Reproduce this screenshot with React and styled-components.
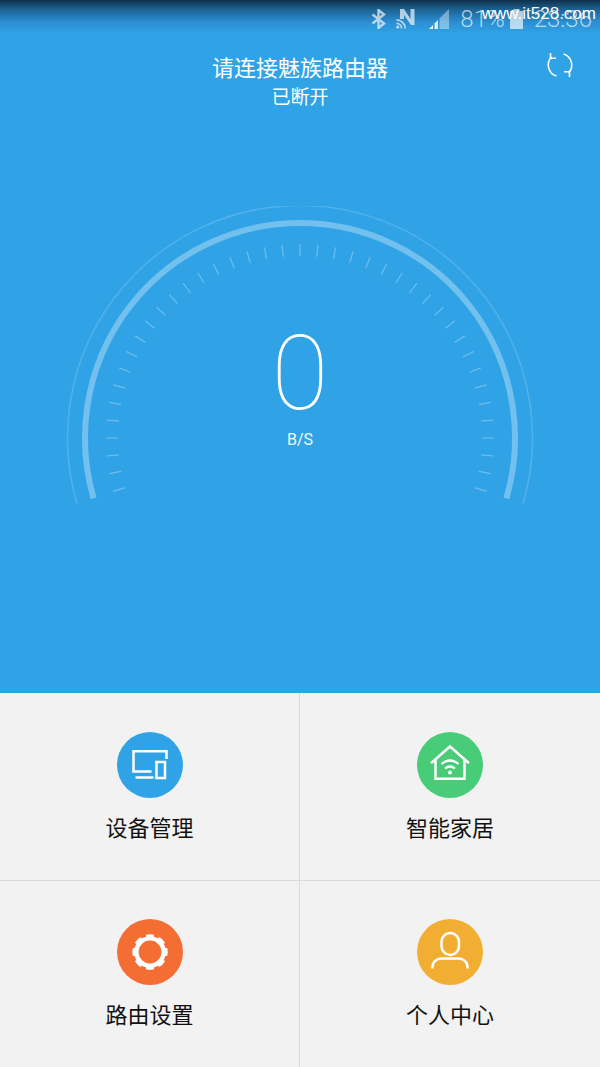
import React from 'react';
import styled, { createGlobalStyle } from 'styled-components';

const cjk = '"Noto Sans CJK SC", "Noto Sans", sans-serif';

const GlobalStyle = createGlobalStyle`
  html, body {
    margin: 0;
    padding: 0;
    background: #f2f2f2;
  }
  body {
    font-family: ${cjk};
  }
`;

const Page = styled.div`
  position: relative;
  width: 600px;
  height: 1067px;
  display: flex;
  flex-direction: column;
  overflow: hidden;
`;

const Hero = styled.section`
  height: 693px;
  flex: none;
  display: flex;
  flex-direction: column;
  background: linear-gradient(180deg, #10304a 0, #1c6596 10px, #2b8fd2 22px, #30a3e6 34px);
  color: #fff;
`;

const StatusBar = styled.div`
  position: relative;
  height: 38px;
  flex: none;
  display: flex;
  justify-content: flex-end;
  align-items: center;
  padding-right: 8px;
  box-sizing: border-box;
  color: rgba(255, 255, 255, 0.66);
`;

const StatusIcon = styled.svg`
  display: block;
  flex: none;
  margin-right: ${p => p.$gap}px;
`;

const StatusText = styled.span`
  font-family: Roboto, sans-serif;
  font-weight: 300;
  font-size: 24px;
  line-height: 38px;
  margin-right: ${p => p.$gap || 0}px;
`;

const Watermark = styled.span`
  position: absolute;
  top: 3px;
  right: 4px;
  font-family: "Liberation Sans", sans-serif;
  font-size: 17px;
  line-height: 22px;
  color: #fff;
`;

const Header = styled.header`
  display: grid;
  grid-template-columns: 1fr auto 1fr;
  align-items: start;
  height: 74px;
  flex: none;
`;

const TitleBlock = styled.div`
  grid-column: 2;
  display: flex;
  flex-direction: column;
  align-items: center;
  padding-top: 12px;
`;

const Title = styled.div`
  font-size: 22px;
  line-height: 32px;
`;

const Subtitle = styled.div`
  font-size: 19px;
  line-height: 27px;
`;

const RefreshButton = styled.div`
  grid-column: 3;
  justify-self: end;
  margin: 12px 25px 0 0;
  width: 30px;
  height: 30px;
`;

const GaugeWrap = styled.div`
  position: relative;
  width: 600px;
  height: 320px;
  margin-top: 94px;
  flex: none;
`;

const GaugeValue = styled.div`
  position: absolute;
  top: 118px;
  left: 0;
  right: 0;
  display: flex;
  flex-direction: column;
  align-items: center;
`;

const Speed = styled.div`
  font-family: Roboto, sans-serif;
  font-weight: 100;
  font-size: 104px;
  line-height: 100px;
`;

const Unit = styled.div`
  font-family: Roboto, sans-serif;
  font-size: 16px;
  line-height: 20px;
  margin-top: 6px;
  opacity: 0.95;
`;

const Grid = styled.nav`
  flex: 1;
  display: grid;
  grid-template-columns: 300px 300px;
  grid-template-rows: 188px 187px;
  background: #f2f2f2;
`;

const Tile = styled.div`
  display: flex;
  flex-direction: column;
  align-items: center;
  box-sizing: border-box;
  padding-top: ${p => p.$bottom ? 38 : 39}px;
  border-right: ${p => p.$left ? '1px solid #dadada' : 'none'};
  border-bottom: ${p => p.$bottom ? 'none' : '1px solid #dadada'};
`;

const IconCircle = styled.div`
  width: 66px;
  height: 66px;
  border-radius: 50%;
  background: ${p => p.$color};
  flex: none;
`;

const TileIcon = styled.svg`
  display: block;
  fill: none;
  stroke: #fff;
  stroke-width: 2.5;
`;

const TileLabel = styled.div`
  margin-top: 12px;
  font-size: 22px;
  line-height: 32px;
  color: #111;
`;

const polar = (r, deg) => {
  const a = (deg * Math.PI) / 180;
  return [300 + r * Math.sin(a), 232 - r * Math.cos(a)];
};

const arcPath = (r, sweep) => {
  const [x1, y1] = polar(r, -sweep);
  const [x2, y2] = polar(r, sweep);
  return `M${x1} ${y1}A${r} ${r} 0 1 1 ${x2} ${y2}`;
};

const Gauge = () => {
  const ticks = [];
  for (let i = -20; i <= 20; i++) {
    const deg = i * (90 / 17);
    const [x1, y1] = polar(182, deg);
    const [x2, y2] = polar(194, deg);
    ticks.push(<line key={i} x1={x1} y1={y1} x2={x2} y2={y2} />);
  }
  return (
    <svg width="600" height="320" fill="none" style={{ display: 'block' }}>
      <path d={arcPath(232.5, 106.3)} stroke="#fff" strokeOpacity="0.16" strokeWidth="1.5" />
      <path d={arcPath(215, 106.3)} stroke="#fff" strokeOpacity="0.32" strokeWidth="6" />
      <g stroke="#fff" strokeOpacity="0.3" strokeWidth="1.2">{ticks}</g>
    </svg>
  );
};

const GearIcon = () => (
  <TileIcon width="66" height="66" viewBox="0 0 66 66">
    <circle cx="33" cy="33" r="13.6" strokeWidth="4.4" />
    <g fill="#fff" stroke="none">
      {[0, 45, 90, 135, 180, 225, 270, 315].map(deg => (
        <path key={deg} d="M29 33V15.8Q33 14.6 37 15.8V33Z" transform={`rotate(${deg} 33 33)`} opacity="1" />
      ))}
    </g>
    <circle cx="33" cy="33" r="11.4" fill="#f46d33" stroke="none" />
  </TileIcon>
);

const tiles = [
  {
    label: '设备管理',
    color: '#30a3e6',
    icon: (
      <TileIcon width="66" height="66" viewBox="0 0 66 66">
        <path d="M49.5 27V19.2H16.5V39.5H34.5" />
        <path d="M18.5 45.5H36.5" />
        <rect x="39.5" y="30" width="8.5" height="16" />
      </TileIcon>
    ),
  },
  {
    label: '智能家居',
    color: '#48cc78',
    icon: (
      <TileIcon width="66" height="66" viewBox="0 0 66 66">
        <path d="M14.8 30.5L33 14.5L51.2 30.5" strokeLinecap="round" />
        <path d="M18.5 27.5V46.8H47.5V27.5" />
        <path d="M24.5 32Q33 25 41.5 32" strokeWidth="2.2" />
        <path d="M28 36.5Q33 32.5 38 36.5" strokeWidth="2.2" />
        <circle cx="33" cy="40.6" r="2" fill="#fff" stroke="none" />
      </TileIcon>
    ),
  },
  { label: '路由设置', color: '#f46d33', icon: <GearIcon /> },
  {
    label: '个人中心',
    color: '#f2ae33',
    icon: (
      <TileIcon width="66" height="66" viewBox="0 0 66 66">
        <rect x="24.5" y="14" width="17.5" height="22" rx="8.75" />
        <path d="M15.5 49.5V48C15.5 43 19.5 39.6 24.5 39.6H41.5C46.5 39.6 50.5 43 50.5 48V49.5" />
      </TileIcon>
    ),
  },
];

const App = () => (
  <Page>
    <GlobalStyle />
    <Hero>
      <StatusBar>
        <StatusIcon $gap={9} width="16" height="20" viewBox="0 0 16 20" fill="none" stroke="currentColor" strokeWidth="2.4">
          <path d="M1.5 5.5L13 14.5L7.5 19V1L13 5.5L1.5 14.5" />
        </StatusIcon>
        <StatusIcon $gap={14} width="19" height="20" viewBox="0 0 19 20" fill="currentColor">
          <path d="M4 0H8L14.5 10V0H18.5V16H15L8 6V10H4Z" />
          <circle cx="1.8" cy="18" r="1.6" />
          <path d="M0.5 13.5A6 6 0 0 1 6.5 19.5H4.8A4.4 4.4 0 0 0 0.5 15.2ZM0.5 10A9.5 9.5 0 0 1 10 19.5H8.3A7.8 7.8 0 0 0 0.5 11.7Z" />
        </StatusIcon>
        <StatusIcon $gap={11} width="20" height="20" viewBox="0 0 20 20" fill="currentColor">
          <path d="M0 20L4 16V20Z" fill="#fff" fillOpacity="0.9" />
          <path d="M5.5 14.5L9 11V20H5.5Z" fill="#fff" fillOpacity="0.85" />
          <path d="M10.5 9.5L20 0V20H10.5Z" fillOpacity="0.6" />
        </StatusIcon>
        <StatusText $gap={5}>81%</StatusText>
        <StatusIcon $gap={11} width="13" height="20" viewBox="0 0 13 20" fill="currentColor">
          <path d="M3.5 0H9.5V2H13V20H0V2H3.5Z" />
        </StatusIcon>
        <StatusText>23:36</StatusText>
        <Watermark>www.it528.com</Watermark>
      </StatusBar>
      <Header>
        <TitleBlock>
          <Title>请连接魅族路由器</Title>
          <Subtitle>已断开</Subtitle>
        </TitleBlock>
        <RefreshButton>
          <svg width="30" height="30" viewBox="0 0 30 30" fill="none" stroke="#fff" strokeWidth="1.6" style={{ display: 'block' }}>
            <path d="M11.5 26A11.5 11.5 0 0 1 6.5 7" />
            <path d="M5.5 3V8.2H11" />
            <path d="M18.5 4A11.5 11.5 0 0 1 23.5 23" />
            <path d="M24.5 27V21.8H19" />
          </svg>
        </RefreshButton>
      </Header>
      <GaugeWrap>
        <Gauge />
        <GaugeValue>
          <Speed>0</Speed>
          <Unit>B/S</Unit>
        </GaugeValue>
      </GaugeWrap>
    </Hero>
    <Grid>
      {tiles.map((t, i) => (
        <Tile key={t.label} $left={i % 2 === 0} $bottom={i > 1}>
          <IconCircle $color={t.color}>{t.icon}</IconCircle>
          <TileLabel>{t.label}</TileLabel>
        </Tile>
      ))}
    </Grid>
  </Page>
);

export default App;
